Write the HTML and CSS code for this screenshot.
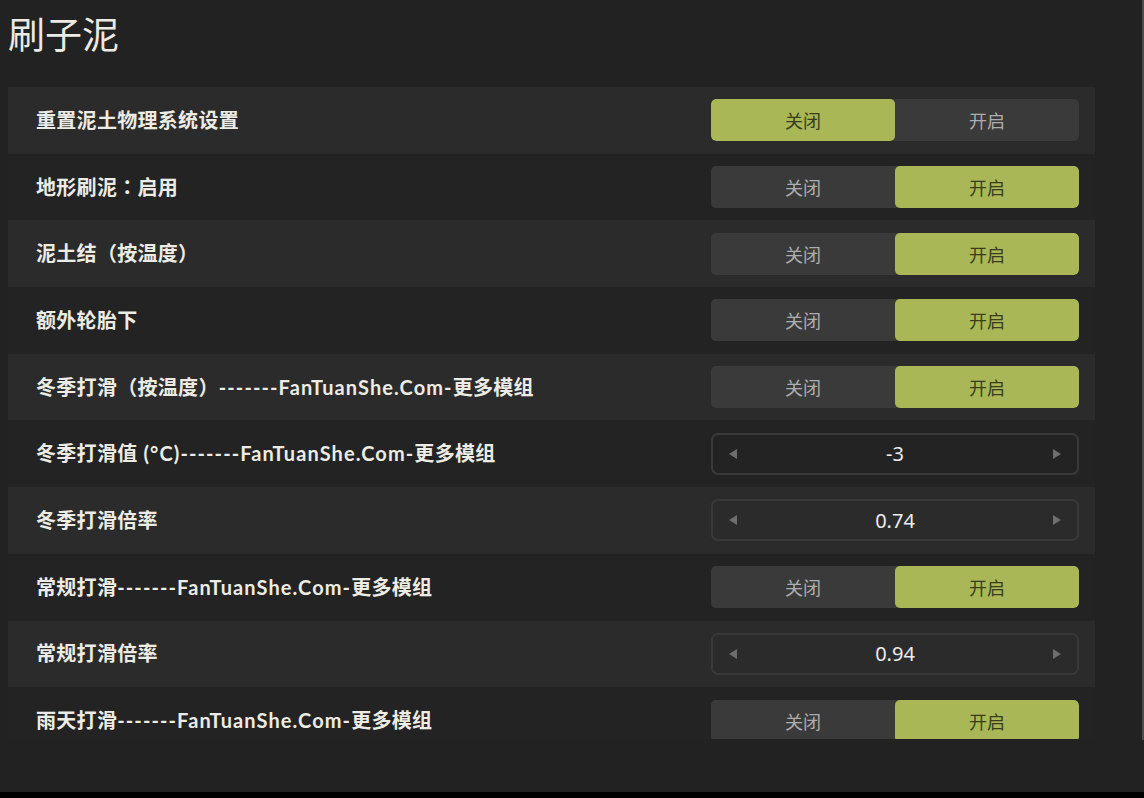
FILE: index.html
```html
<!DOCTYPE html>
<html lang="zh-CN">
<head>
<meta charset="UTF-8" />
<meta name="viewport" content="width=device-width, initial-scale=1.0" />
<title>刷子泥</title>
<link rel="stylesheet" href="styles.css">
</head>
<body>
<div class="screen">
  <h1 class="title">刷子泥</h1>
  <div class="list">
    <div class="row">
      <div class="label">重置泥土物理系统设置</div>
      <div class="toggle"><span class="opt on">关闭</span><span class="opt">开启</span></div>
    </div>
    <div class="row">
      <div class="label">地形刷泥<span class="colon" lang="zh-TW">：</span>启用</div>
      <div class="toggle"><span class="opt">关闭</span><span class="opt on">开启</span></div>
    </div>
    <div class="row">
      <div class="label">泥土结（按温度）</div>
      <div class="toggle"><span class="opt">关闭</span><span class="opt on">开启</span></div>
    </div>
    <div class="row">
      <div class="label">额外轮胎下</div>
      <div class="toggle"><span class="opt">关闭</span><span class="opt on">开启</span></div>
    </div>
    <div class="row">
      <div class="label">冬季打滑（按温度）<span class="en">-------FanTuanShe.Com-</span>更多模组</div>
      <div class="toggle"><span class="opt">关闭</span><span class="opt on">开启</span></div>
    </div>
    <div class="row">
      <div class="label">冬季打滑值<span class="en"> (°C)-------FanTuanShe.Com-</span>更多模组</div>
      <div class="stepper"><span class="arrow left"></span><span class="value">-3</span><span class="arrow right"></span></div>
    </div>
    <div class="row">
      <div class="label">冬季打滑倍率</div>
      <div class="stepper"><span class="arrow left"></span><span class="value">0.74</span><span class="arrow right"></span></div>
    </div>
    <div class="row">
      <div class="label">常规打滑<span class="en">-------FanTuanShe.Com-</span>更多模组</div>
      <div class="toggle"><span class="opt">关闭</span><span class="opt on">开启</span></div>
    </div>
    <div class="row">
      <div class="label">常规打滑倍率</div>
      <div class="stepper"><span class="arrow left"></span><span class="value">0.94</span><span class="arrow right"></span></div>
    </div>
    <div class="row">
      <div class="label">雨天打滑<span class="en">-------FanTuanShe.Com-</span>更多模组</div>
      <div class="toggle"><span class="opt">关闭</span><span class="opt on">开启</span></div>
    </div>
  </div>
</div>
<div class="footer"></div>
</body>
</html>
```

FILE: styles.css
```css
body {
  margin: 0;
  height: 798px;
  overflow: hidden;
  background-color: #222222;
  font-family: "Noto Sans", "Noto Sans CJK SC", sans-serif;
  color: #ecece4;
  display: flex;
  flex-direction: column;
}
.screen {
  height: 740px;
  border-right: 2px solid #4c4c4c;
  display: flex;
  flex-direction: column;
}
.title {
  margin: 0;
  height: 87px;
  padding: 10px 0 0 8px;
  box-sizing: border-box;
  font-size: 37px;
  font-weight: normal;
  line-height: 50px;
  color: #ebebe3;
}
.list {
  margin-left: 8px;
  width: 1087px;
  height: 652px;
  overflow: hidden;
}
.row {
  height: 66.7px;
  display: flex;
  align-items: center;
  justify-content: space-between;
  padding: 0 16px 0 28px;
  background-color: #232323;
}
.row:nth-child(odd) {
  background-color: #2b2b2b;
}
.label {
  font-family: Lato, "Noto Sans CJK SC", sans-serif;
  font-size: 20px;
  font-weight: bold;
  letter-spacing: 0.3px;
  margin-top: -2px;
}
.label .en {
  letter-spacing: 1.1px;
}
.label .colon {
  font-family: "Noto Sans CJK TC", "Noto Sans CJK JP", sans-serif;
}
.toggle {
  width: 368px;
  height: 42px;
  display: flex;
  border-radius: 5px;
  background-color: #3a3a3a;
  overflow: hidden;
}
.opt {
  flex: 1;
  display: flex;
  justify-content: center;
  align-items: center;
  font-size: 18px;
  color: #adadad;
}
.opt.on {
  background-color: #a9b756;
  color: #393d1c;
  border-radius: 5px;
}
.stepper {
  width: 368px;
  height: 42px;
  box-sizing: border-box;
  border: 2px solid #393939;
  border-radius: 7px;
  display: flex;
  align-items: center;
  padding: 0 16px;
}
.value {
  flex: 1;
  text-align: center;
  font-size: 20px;
  color: #ececec;
}
.arrow {
  width: 0;
  height: 0;
  border-top: 5px solid transparent;
  border-bottom: 5px solid transparent;
}
.arrow.left {
  border-right: 8px solid #6e6e6e;
}
.arrow.right {
  border-left: 8px solid #6e6e6e;
}
.footer {
  margin-top: auto;
  height: 6px;
  background-color: #000;
}
```
